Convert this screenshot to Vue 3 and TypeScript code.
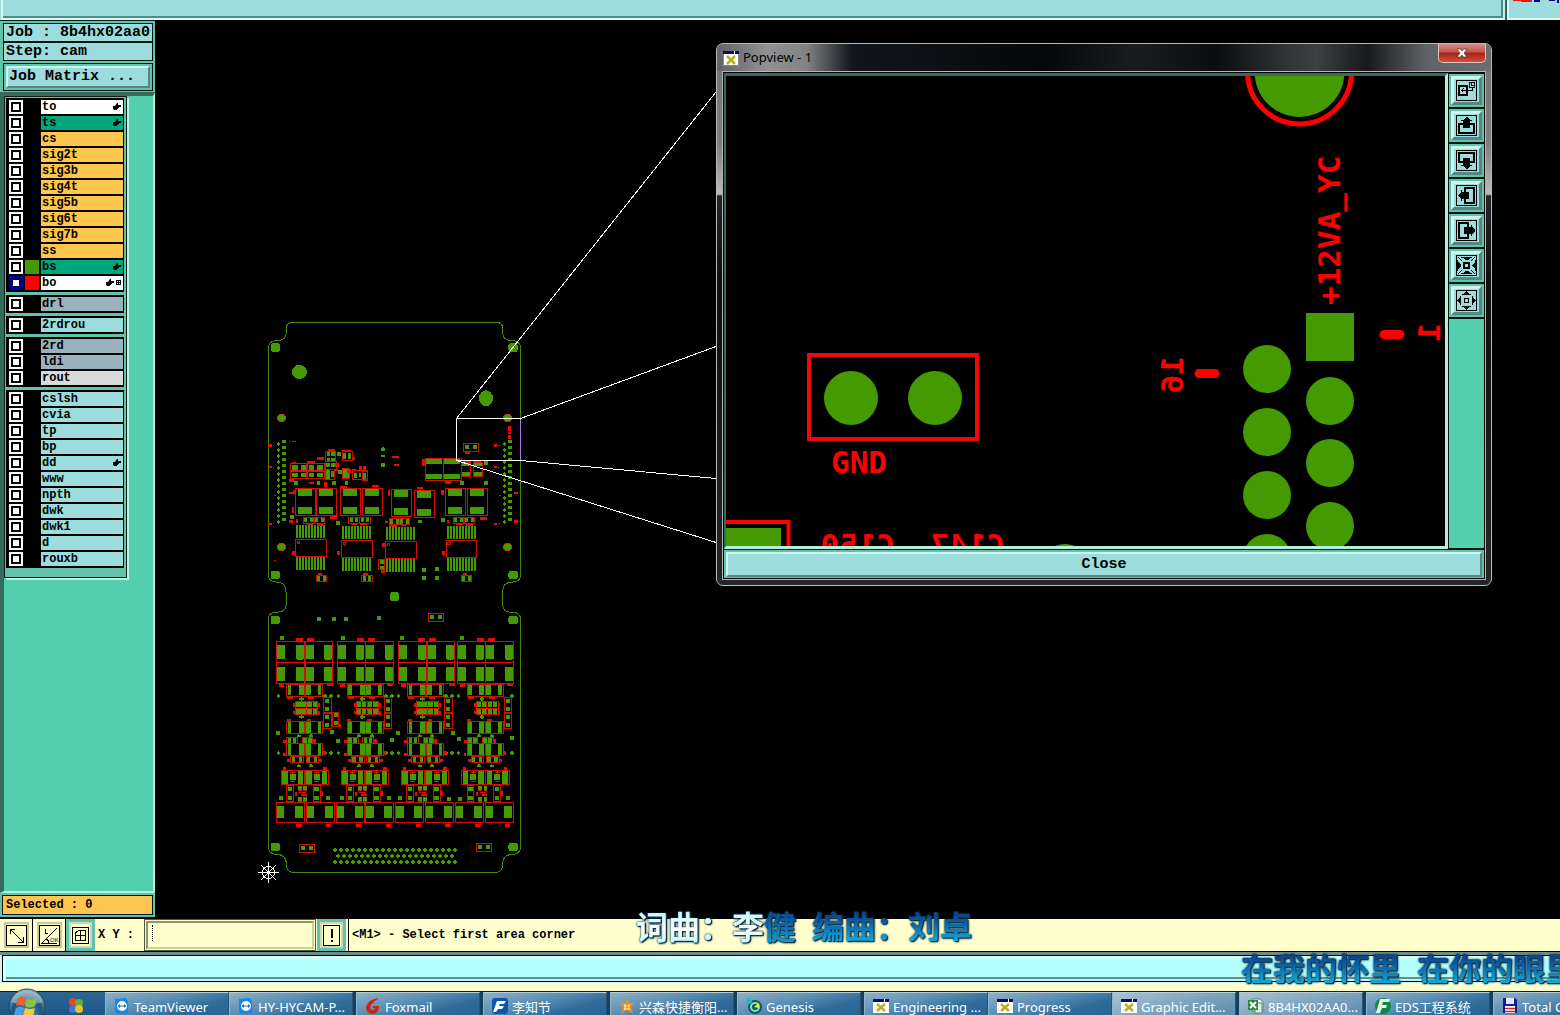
<script setup lang="ts">
import { ref } from 'vue'

type Box = [number, number, number, number]

interface Layer {
  name: string
  tone: string
  swatch?: string
  hand?: boolean
  grid?: boolean
  on?: boolean
}

const groups = ref<Layer[][]>([
  [
    { name: 'to', tone: 'white', hand: true },
    { name: 'ts', tone: 'green', hand: true },
    { name: 'cs', tone: 'amber' },
    { name: 'sig2t', tone: 'amber' },
    { name: 'sig3b', tone: 'amber' },
    { name: 'sig4t', tone: 'amber' },
    { name: 'sig5b', tone: 'amber' },
    { name: 'sig6t', tone: 'amber' },
    { name: 'sig7b', tone: 'amber' },
    { name: 'ss', tone: 'amber' },
    { name: 'bs', tone: 'green', swatch: 'lime', hand: true },
    { name: 'bo', tone: 'white', swatch: 'red', hand: true, grid: true, on: true },
  ],
  [{ name: 'drl', tone: 'slate' }],
  [{ name: '2rdrou', tone: 'aqua' }],
  [
    { name: '2rd', tone: 'slate' },
    { name: 'ldi', tone: 'slate' },
    { name: 'rout', tone: 'grey' },
  ],
  [
    { name: 'cslsh', tone: 'aqua' },
    { name: 'cvia', tone: 'aqua' },
    { name: 'tp', tone: 'aqua' },
    { name: 'bp', tone: 'aqua' },
    { name: 'dd', tone: 'aqua', hand: true },
    { name: 'www', tone: 'aqua' },
    { name: 'npth', tone: 'aqua' },
    { name: 'dwk', tone: 'aqua' },
    { name: 'dwk1', tone: 'aqua' },
    { name: 'd', tone: 'aqua' },
    { name: 'rouxb', tone: 'aqua' },
  ],
])

const xy = ref('')

const tasks = [
  { icon: 'tv', label: 'TeamViewer', gap: false },
  { icon: 'tv', label: 'HY-HYCAM-P...', gap: false },
  { icon: 'fox', label: 'Foxmail', gap: true },
  { icon: 'f', label: '李知节', gap: true },
  { icon: 'star', label: '兴森快捷衡阳...', gap: true },
  { icon: 'gen', label: 'Genesis', gap: true },
  { icon: 'x', label: 'Engineering ...', gap: true },
  { icon: 'x', label: 'Progress', gap: false },
  { icon: 'x', label: 'Graphic Edit...', gap: false, lit: true },
  { icon: 'xls', label: '8B4HX02AA0...', gap: true, lit: true },
  { icon: 'eds', label: 'EDS工程系统', gap: true },
  { icon: 'disk', label: 'Total Co...', gap: true },
]

const views = ['home', 'up', 'down', 'left', 'right', 'in', 'out']
const turn: Record<string, number> = { up: 0, right: 90, down: 180, left: 270 }

/* Board artwork, three units to one screen pixel. */
const pads: Box[] = []
const silk: Box[] = []
const marks: Box[] = []
const pad = (...b: Box) => pads.push(b)
const box = (...b: Box) => silk.push(b)
const mark = (...b: Box) => marks.push(b)

// side connectors
for (let i = 0; i < 14; i++) {
  const y = 389 + i * 18
  for (const x of [67, 744]) pad(x, y, 12, 11)
  for (const x of [51, 728]) { pad(x, y + 11, 10, 6); pad(x + 3, y + 8, 4, 11) }
}
for (const [x, y] of [[25, 406], [25, 471], [25, 641], [702, 406], [702, 471], [702, 641], [763, 548], [763, 634], [88, 548], [88, 634]]) {
  mark(x, y - 3, 10, 7); mark(x + 13, y - 1, 5, 3)
}
for (const [x, y] of [[86, 393], [96, 393], [103, 393], [42, 555], [718, 555], [42, 751]]) mark(x, y, 5, 3)
mark(744, 348, 10, 14); mark(745, 365, 8, 7); mark(744, 376, 10, 10)

// small parts on the upper left
for (const b of [[92, 460, 100, 46], [196, 425, 30, 30], [196, 455, 32, 22], [196, 477, 26, 30], [246, 424, 32, 28], [248, 476, 20, 30], [278, 482, 44, 26], [306, 484, 16, 28]] as Box[]) box(...b)
for (const b of [
  [97, 466, 18, 14], [124, 466, 18, 14], [148, 466, 14, 14], [172, 466, 18, 14],
  [97, 488, 18, 14], [124, 488, 18, 14], [148, 488, 14, 14], [172, 488, 18, 14],
  [200, 427, 10, 11], [214, 427, 10, 11], [200, 443, 10, 10], [214, 443, 10, 10], [232, 427, 10, 10],
  [248, 428, 10, 20], [264, 428, 10, 20], [198, 458, 12, 14], [214, 458, 10, 14], [198, 480, 12, 26], [214, 484, 12, 16],
  [234, 480, 12, 12], [250, 476, 16, 28], [282, 488, 8, 16], [296, 488, 8, 14], [310, 490, 8, 16],
  [364, 414, 11, 8], [364, 436, 11, 6], [363, 458, 13, 12], [367, 411, 5, 12], [102, 512, 12, 12], [170, 514, 10, 10],
  [217, 513, 12, 12], [256, 514, 8, 10], [600, 514, 11, 11], [673, 513, 11, 11], [673, 454, 11, 11], [91, 615, 11, 12], [228, 633, 12, 11], [475, 631, 10, 8], [544, 625, 10, 10],
  [487, 774, 11, 11], [526, 771, 11, 11], [487, 798, 11, 11], [526, 798, 11, 11],
] as Box[]) pad(...b)
for (const b of [
  [92, 479, 100, 6], [139, 460, 5, 46], [95, 455, 14, 6], [142, 454, 22, 7], [172, 440, 20, 10], [204, 418, 22, 6],
  [226, 460, 10, 12], [262, 478, 12, 10], [246, 420, 28, 4], [278, 440, 8, 10], [298, 468, 8, 12], [310, 468, 8, 12],
  [88, 508, 14, 7], [147, 515, 15, 7], [192, 516, 10, 14], [222, 478, 12, 6], [276, 478, 12, 5], [396, 438, 20, 5], [402, 461, 14, 6],
  [487, 447, 9, 20], [555, 514, 18, 7], [615, 425, 14, 6], [610, 452, 24, 6], [640, 449, 22, 6],
  [96, 592, 7, 18], [98, 540, 6, 12], [241, 527, 20, 6], [337, 526, 20, 6], [383, 541, 6, 18], [472, 530, 18, 7], [544, 540, 7, 16],
  [210, 619, 20, 7], [660, 622, 20, 7], [108, 628, 6, 10], [376, 634, 8, 6], [560, 630, 6, 8], [140, 640, 20, 6], [170, 642, 20, 5], [274, 640, 16, 6], [300, 640, 20, 6], [388, 644, 24, 6], [424, 644, 14, 5], [588, 640, 20, 6], [618, 642, 20, 6],
  [97, 724, 8, 11], [232, 724, 8, 12], [366, 698, 8, 12], [546, 724, 8, 12], [362, 780, 12, 8], [174, 789, 12, 6], [310, 790, 14, 6], [608, 790, 14, 6],
] as Box[]) mark(...b)

for (const [x, y] of [[106, 535], [169, 535], [241, 535], [307, 535], [394, 538], [463, 541], [556, 535], [622, 535]]) {
  box(x, y, 61, 81); pad(x + 9, y + 2, 40, 21); pad(x + 9, y + 56, 40, 21)
}
for (const x of [496, 550]) { box(x, 446, 54, 65); pad(x + 3, 446, 48, 15); pad(x + 3, 492, 48, 15) }
for (const x of [604, 640]) { box(x, 456, 28, 44); pad(x + 3, 458, 22, 11); pad(x + 3, 485, 22, 13) }

for (const [x, y] of [[130, 621], [163, 621], [266, 621], [299, 621], [388, 626], [418, 626], [580, 621], [613, 621], [169, 796], [305, 796], [604, 796]]) {
  box(x, y, 31, 18); pad(x + 3, y + 2, 9, 14); pad(x + 19, y + 2, 9, 14)
}
box(356, 748, 18, 30); pad(359, 751, 12, 10); pad(359, 767, 12, 9)

for (const [x, y, w] of [[106, 688, 94], [244, 691, 94], [376, 694, 94], [558, 691, 92]]) {
  box(x, y, w, 50); box(x + 5, y + 5, 7, 7)
  for (let i = 0; i < 10; i++) { pad(x + 3 + i * 9, y - 42, 6, 39); pad(x + 3 + i * 9, y + 53, 6, 39) }
}

// two-pin headers
for (const [x, y] of [[610, 400], [505, 910], [118, 1603], [649, 1600]]) {
  box(x, y, 46, 23); pad(x + 6, y + 6, 12, 12); pad(x + 28, y + 6, 12, 12)
}

// loose test points
for (const [x, y] of [[171, 921], [216, 921], [252, 921], [351, 918], [60, 978], [244, 978], [420, 978], [600, 978], [48, 1263], [228, 1287], [390, 1284], [408, 1263], [574, 1263], [592, 1281], [750, 1278], [210, 1260], [57, 1458], [198, 1458], [240, 1458], [380, 1458], [414, 1458], [560, 1461], [595, 1461], [738, 1458]]) pad(x, y, 12, 12)
for (const y of [1152, 1324]) for (const x of [50, 190, 208, 230, 372, 390, 410, 552, 570, 590, 750]) { pad(x, y + 3, 11, 5); pad(x + 3, y, 5, 11) }

// four repeated channels
const channels = [
  { a: 50, b: 80, c: 64 },
  { a: 232, b: 262, c: 244 },
  { a: 416, b: 443, c: 424 },
  { a: 592, b: 621, c: 605 },
]
channels.forEach(({ a, b, c }, n) => {
  for (const y of [994, 1058]) {
    for (const x of [a, a + 85]) {
      box(x, y, 83, 62); pad(x + 2, y + 12, 24, 42); pad(x + 57, y + 12, 24, 42); pad(x + 60, y + 52, 18, 4)
    }
  }
  mark(a + 58, 985, 22, 9); mark(a + 92, 985, 20, 9); mark(a, 1055, 168, 4)
  mark(a + 8, 1122, 14, 8); mark(a + 150, 1122, 18, 7)
  for (const y of [1123, 1235, 1301]) {
    box(b, y, 54, 35); box(b + 55, y, 53, 35)
    for (const dx of [3, 37, 57, 93]) pad(b + dx, y + 2, dx === 37 || dx === 57 ? 15 : 11, 31)
  }
  mark(b + 2, 1161, 18, 6); mark(b + 65, 1161, 18, 6); mark(b, 1226, 12, 8); mark(b + 60, 1226, 14, 7)
  box(b + 27, 1174, 66, 40)
  for (const dx of [29, 44, 62, 78]) for (const y of [1177, 1197]) pad(b + dx, y, 13, 15)
  mark(b + 27, 1194, 66, 3); mark(b + 58, 1174, 3, 40); mark(b + 20, 1180, 6, 10); mark(b + 95, 1180, 5, 12); mark(b + 20, 1204, 6, 8); mark(b + 95, 1204, 5, 10)
  for (const y of [1162, 1216]) { pad(b + 38, y + 2, 14, 7); pad(b + 42, y, 5, 12) }
  for (const y of [1162, 1210]) {
    box(b + 111, y, 22, 46); pad(b + 116, y + 6, 12, 12); pad(b + 116, y + 28, 12, 12)
  }
  for (const dx of [0, 46]) { box(b + dx, 1282, 32, 18); pad(b + dx + 3, 1284, 11, 14); pad(b + dx + 18, 1284, 11, 14) }
  for (const dx of [12, 58]) { box(b + dx, 1338, 38, 20); pad(b + dx + 3, 1340, 10, 16); pad(b + dx + 24, 1340, 10, 16) }
  mark(b - 10, 1290, 10, 10); mark(b + 78, 1286, 10, 14); mark(b - 10, 1328, 8, 10); mark(b + 108, 1322, 9, 14); mark(b + 2, 1346, 9, 11); mark(b + 98, 1346, 8, 9)
  for (const dx of [30, 68]) for (const y of [1271, 1361]) { pad(b + dx, y + 3, 12, 6); pad(b + dx + 3, y, 5, 11) }
  for (const dx of [0, 72]) {
    box(c + dx, 1381, 70, 43); pad(c + dx + 3, 1384, 16, 37); pad(c + dx + 50, 1384, 16, 37)
    pad(c + dx + 26, 1393, 18, 18); mark(c + dx + 27, 1387, 15, 3); mark(c + dx + 27, 1414, 15, 3)
    mark(c + dx + 33, 1384, 3, 9)
  }
  mark(c + 4, 1371, 10, 8); mark(c + 126, 1371, 10, 8)
  for (const dx of [16, 96]) { box(c + dx, 1427, 20, 47); pad(c + dx + 3, 1430, 14, 12); pad(c + dx + 3, 1459, 14, 12) }
  for (const dx of [50, 66]) for (const y of [1429, 1461]) { pad(c + dx, y, 11, 11); mark(c + dx, y + 11, 11, 3) }
  mark(c + 42, 1446, 6, 12); mark(c + 54, 1445, 20, 4); mark(c + 60, 1453, 16, 4); mark(c + 118, 1444, 7, 14)
  const e = 49 + n * 179
  for (const x of [e, e + 89]) {
    box(x, 1477, 84, 60); pad(x + 2, 1488, 22, 36); pad(x + 56, 1488, 24, 36)
    mark(x + 60, 1542, 16, 8)
  }
})
box(218, 1206, 18, 44); pad(221, 1210, 12, 12); pad(221, 1232, 12, 12); mark(236, 1242, 8, 10)

// bottom connector
for (let i = 0; i < 21; i++) {
  const x = 218 + i * 18
  for (const y of [1613, 1649]) { pad(x, y + 3, 12, 6); pad(x + 3, y, 6, 12) }
  if (i < 20) { pad(x + 9, 1634, 12, 6); pad(x + 12, 1631, 6, 12) }
}

const holes = [[46, 113], [759, 113], [46, 795], [759, 795], [46, 930], [759, 930], [46, 1611], [759, 1611], [403, 860]]
const rings = [[64, 324], [742, 324], [64, 711], [742, 711]]
const outline = 'M98 37Q79 37 79 56V68Q79 92 50 92Q25 92 25 116V792Q25 816 48 816Q78 816 78 845V885Q79 907 48 907Q25 907 25 930V1608Q25 1633 48 1633Q79 1633 79 1662Q79 1687 100 1687H708Q728 1687 728 1662Q728 1633 758 1633Q782 1633 782 1608V930Q782 907 758 907Q728 907 728 885V845Q728 816 758 816Q782 816 782 792V116Q782 92 756 92Q728 92 728 68V56Q728 37 708 37Z'

const discs = [[1267, 369], [1267, 432], [1267, 495], [1267, 558], [1330, 401], [1330, 463], [1330, 526]]
</script>

<template>
  <div class="screen">
    <header class="top">
      <div class="top-main"></div>
      <div class="top-side">
        <svg width="50" height="4" viewBox="0 0 50 4" aria-hidden="true">
          <path d="M4 0H23V2H12V1H4z" fill="#e11" />
          <path d="M25 0H31V2H25zM40 0H46V1H40zM48 0H50V3H48z" fill="#008" />
        </svg>
      </div>
    </header>

    <main class="work">
      <aside class="side">
        <div class="info">
          <div class="line">Job : 8b4hx02aa0</div>
          <div class="line">Step: cam</div>
        </div>
        <div class="matrix"><button type="button" class="bevel">Job Matrix ...</button></div>
        <div class="well">
          <div class="layers">
            <div v-for="(g, gi) in groups" :key="gi" class="group">
              <div v-for="l in g" :key="l.name" class="row">
                <input :id="'layer-' + l.name" v-model="l.on" type="checkbox" />
                <span class="swatch" :class="l.swatch"></span>
                <label :for="'layer-' + l.name" :class="l.tone">
                  <span class="name">{{ l.name }}</span>
                  <svg v-if="l.hand" width="8" height="8" viewBox="0 0 8 8"><path d="M0 3H2L4 0H5V2H8V4H6V5H5V6H4V7H1L0 6z" /></svg>
                  <svg v-if="l.grid" width="5" height="8" viewBox="0 0 5 8"><path d="M0 1.500H5M0 3.500H5M0 5.500H5M.5 1V6M2.500 1V6M4.500 1V6" stroke="#000" fill="none" /></svg>
                </label>
              </div>
            </div>
          </div>
        </div>
        <div class="selected"><div>Selected : 0</div></div>
      </aside>

      <section class="canvas">
        <svg class="plot" aria-label="Board">
          <svg x="105" y="290" width="270" height="570" viewBox="0 0 810 1710" shape-rendering="crispEdges">
            <path :d="outline" fill="none" stroke="#3d8a08" stroke-width="3" />
            <rect v-for="(p, i) in pads" :key="'p' + i" :x="p[0]" :y="p[1]" :width="p[2]" :height="p[3]" fill="#449a00" />
            <rect v-for="(h, i) in holes" :key="'h' + i" :x="h[0] - 14" :y="h[1] - 13" width="28" height="26" rx="8" fill="#449a00" />
            <ellipse cx="118" cy="186" rx="23" ry="21" fill="#449a00" />
            <ellipse cx="678" cy="265" rx="21" ry="24" fill="#449a00" />
            <circle v-for="(h, i) in rings" :key="'r' + i" :cx="h[0]" :cy="h[1]" r="12" fill="#449a00" stroke="#c8380a" stroke-width="3" />
            <rect v-for="(s, i) in silk" :key="'s' + i" :x="s[0]" :y="s[1]" :width="s[2]" :height="s[3]" fill="none" stroke="#d01008" stroke-width="3" />
            <rect v-for="(m, i) in marks" :key="'m' + i" :x="m[0]" :y="m[1]" :width="m[2]" :height="m[3]" fill="#e80c08" />
          </svg>
          <g transform="translate(-155 -20)" fill="none" stroke="#fff" shape-rendering="crispEdges">
            <path d="M456.500 460.500V418.500H520.500M456.500 460.500H520.500M456.500 418.500L716 92M520.500 418.500L716 346.500M520.500 460.500L716 478.500M456.500 460.500L716 542.500" />
            <path d="M520.500 419V460" stroke="#b070f0" />
            <path d="M258 872.500H279M268.500 862V883M261 865L276 880M276 865L261 880" />
            <circle cx="268.500" cy="872.500" r="6" />
          </g>
        </svg>

        <div class="popview">
          <div class="caption">
            <svg class="xicon" width="16" height="16" viewBox="0 0 16 16"><path d="M0 1H16V16H0z" fill="#fff" /><path d="M0 1H11V4H0zM12 1H16V4H12z" fill="#0a0a70" /><path d="M4 6L12 14M12 6L4 14" stroke="#b9b020" stroke-width="2.500" /><path d="M.5 4V15.500H15.500V4" fill="none" stroke="#888" /></svg>
            <span class="title">Popview - 1</span>
            <button type="button" class="x" aria-label="Close window"><svg width="12" height="10" viewBox="0 0 12 10"><path d="M1 1H4.500L6 3L7.500 1H11L8 5L11 9H7.500L6 7L4.500 9H1L4 5z" fill="#fff" stroke="#5b2f2f" stroke-width=".7" /></svg></button>
          </div>
          <div class="client">
            <div class="stage">
              <svg class="zoomed" aria-label="Zoomed board">
                <g transform="translate(-726 -76)">
                  <circle cx="1299.500" cy="72" r="45" fill="#449a00" />
                  <circle cx="1299.500" cy="72" r="52" fill="none" stroke="red" stroke-width="5" />
                  <rect x="1306" y="313" width="48" height="48" fill="#449a00" />
                  <circle v-for="(d, i) in discs" :key="i" :cx="d[0]" :cy="d[1]" r="24" fill="#449a00" />
                  <circle cx="1065" cy="568" r="24" fill="#449a00" />
                  <circle cx="851" cy="398" r="27" fill="#449a00" />
                  <circle cx="935" cy="398" r="27" fill="#449a00" />
                  <rect x="809" y="355" width="168" height="84" fill="none" stroke="#f00808" stroke-width="4" />
                  <path d="M720 522H788.500V560" fill="none" stroke="red" stroke-width="4" />
                  <rect x="720" y="528" width="61" height="40" fill="#449a00" />
                  <path d="M1384 334.500H1400M1199 373.500H1215" stroke="red" stroke-width="9" stroke-linecap="round" />
                  <g class="pcb">
                    <text x="831" y="473">GND</text>
                    <text transform="translate(1340 305) rotate(-90)">+12VA_YC</text>
                    <text transform="matrix(0 1 1 0 1183 356)">16</text>
                    <text transform="matrix(0 1 1 0 1440 323)">1</text>
                    <text transform="matrix(-1 0 0 1 895 556)">C150</text>
                    <text transform="matrix(-1 0 0 1 1005 556)">C147</text>
                  </g>
                </g>
              </svg>
              <div class="tools">
                <div v-for="v in views" :key="v" class="cell">
                  <button type="button" class="bevel" :aria-label="v">
                    <svg width="21" height="21" viewBox="0 0 21 21" shape-rendering="crispEdges">
                      <rect x=".5" y=".5" width="20" height="20" fill="none" stroke="#000" />
                      <g v-if="v === 'home'" fill="none" stroke="#000">
                        <rect x="3" y="6" width="8" height="9" stroke-width="2" />
                        <rect x="13.500" y="2.500" width="5" height="5" /><path d="M15.500 3V5.500H18M16.500 8V10.500H5M7.500 8.500L5.500 10.500L7.500 12.500" />
                      </g>
                      <g v-else-if="v === 'in'">
                        <rect x="8" y="8" width="5" height="5" fill="none" stroke="#000" stroke-width="2" />
                        <path d="M5 2H16V3H14L12 5H9L7 3H5zM5 19H16V18H14L12 16H9L7 18H5zM1 5V16H2V14L5 11V10L2 7V5zM20 5V16H19V14L16 11V10L19 7V5z" />
                        <path d="M2 2L6 6M19 2L15 6M2 19L6 15M19 19L15 15" stroke="#000" />
                      </g>
                      <g v-else-if="v === 'out'">
                        <rect x="8.500" y="8.500" width="4" height="4" fill="none" stroke="#000" />
                        <path d="M10 1H11L13 4H15V5H6V4H8zM10 20H11L13 17H15V16H6V17H8zM1 10V11L4 13V15H5V6H4V8zM20 10V11L17 13V15H16V6H17V8z" />
                      </g>
                      <g v-else :transform="'rotate(' + turn[v] + ' 10.5 10.5)'">
                        <path d="M8 9H3V18H18V9H13" fill="none" stroke="#000" stroke-width="2" />
                        <path d="M10 2H11L14 5H16V6H14V13H7V6H5V5H7z" />
                      </g>
                    </svg>
                  </button>
                </div>
              </div>
            </div>
            <div class="closebar"><button type="button" class="bevel">Close</button></div>
          </div>
        </div>
      </section>
    </main>

    <footer class="foot">
      <div class="command">
        <button type="button" class="tool" aria-label="Zoom"><svg width="21" height="21" viewBox="0 0 21 21"><path d="M.5 .5H20.500V20.500H.5zM4 4L17 17M4 9V4H9M12 17H17V12" /></svg></button>
        <button type="button" class="tool" aria-label="Angle"><svg width="21" height="21" viewBox="0 0 21 21"><path d="M.5 .5H20.500V20.500H.5zM18 3L3 18H18M6 4V8H9M7 14Q10 15 10 18" /><text x="11" y="17">OK</text></svg></button>
        <button type="button" class="tool on" aria-label="Grid"><svg width="21" height="21" viewBox="0 0 21 21"><path d="M2.500 2.500H18.500V18.500H2.500zM10.500 5V16M5 10.500H16M5.500 16V9Q6 5.500 11 5.500H15.500V15.500H5" /></svg></button>
        <label class="xy" for="xy">X Y :</label>
        <div class="entry"><input id="xy" v-model="xy" type="text" /><i class="caret"></i></div>
        <button type="button" class="tool on bang" aria-label="Alert"><svg width="21" height="21" viewBox="0 0 21 21"><path d="M2.500 .5H18.500V20.500H2.500z" /><path d="M10.500 4V13M10.500 15V17" stroke-width="2" /></svg></button>
        <span class="prompt">&lt;M1&gt; - Select first area corner</span>
      </div>
      <div class="message"><div></div></div>
      <nav class="taskbar">
        <svg class="orb" width="40" height="40" viewBox="0 0 40 40" aria-label="Start">
          <defs>
            <radialGradient id="orb" cx=".5" cy=".7" r=".7"><stop offset="0" stop-color="#3fa4cf" /><stop offset=".6" stop-color="#1d5278" /><stop offset="1" stop-color="#9db8c8" /></radialGradient>
          </defs>
          <circle cx="20" cy="20" r="18" fill="url(#orb)" stroke="#23435a" />
          <path d="M4 15A17 17 0 0 1 36 15Q20 20 4 15" fill="#c7dbe5" opacity=".45" />
          <path d="M11 11Q15 8 19 11L17 19Q13 17 9 19z" fill="#e8642c" />
          <path d="M20 12Q25 14 30 11L28 19Q23 22 18 19z" fill="#8cc63e" />
          <path d="M9 21Q13 18 17 21L15 29Q11 26 7 29z" fill="#4b9fe0" />
          <path d="M18 21Q23 23 28 21L26 29Q21 32 16 29z" fill="#fbc633" />
        </svg>
        <svg class="wheel" width="18" height="18" viewBox="0 0 18 18" aria-label="Launcher"><circle cx="6" cy="5" r="4" fill="#e04a2a" /><circle cx="12" cy="6" r="4" fill="#5cb43a" /><circle cx="6" cy="12" r="4" fill="#3a78d8" /><circle cx="12" cy="12" r="4" fill="#e8c22c" /></svg>
        <a v-for="(t, i) in tasks" :key="i" href="#" class="task" :class="{ gap: t.gap, lit: t.lit }">
          <svg width="16" height="16" viewBox="0 0 16 16">
            <g v-if="t.icon === 'tv'"><path d="M1 1L12 0L14 3V15L3 16L1 14z" fill="#1687e8" /><circle cx="8" cy="8" r="5" fill="#fff" /><path d="M3.500 8L6 6V7.500H10V6L12.500 8L10 10V8.500H6V10z" fill="#1470c8" /></g>
            <g v-else-if="t.icon === 'fox'"><path d="M14 0Q3 1 1 9Q1 16 8 16Q14 15 14 8L8 8V10H10Q9 13 7 12Q4 11 6 7Q9 3 14 0z" fill="#d4200c" /></g>
            <g v-else-if="t.icon === 'f'"><rect width="16" height="16" rx="3" fill="#0b56b0" /><path d="M5 3H14L12 6H8L7 8H12L10 11H6L4 14H1z" fill="#fff" /></g>
            <g v-else-if="t.icon === 'star'"><path d="M8 0L10 5L16 5L12 9L14 16L8 12L2 16L4 9L0 5L6 5z" fill="#f58a1c" /><path d="M5 8H11M6 6V12M10 6V12M5 11H11" stroke="#fff0a0" fill="none" /></g>
            <g v-else-if="t.icon === 'gen'"><circle cx="9" cy="9" r="7" fill="#0c5a50" /><circle cx="9" cy="9" r="4" fill="none" stroke="#7fe0d0" stroke-width="2" /><path d="M8 9L13 5V10z" fill="#e8f040" /><circle cx="3" cy="3" r="3" fill="#27b7c4" /></g>
            <g v-else-if="t.icon === 'x'"><path d="M0 1H16V15H0z" fill="#fff" /><path d="M0 1H11V4H0zM12 1H16V4H12z" fill="#0a0a70" /><path d="M4 6L12 13M12 6L4 13" stroke="#b9b020" stroke-width="2.500" /></g>
            <g v-else-if="t.icon === 'xls'"><path d="M4 1H12L15 4V13H4z" fill="#eef6ee" stroke="#587" /><path d="M7 5H14V15H7z" fill="#dfeee0" stroke="#587" /><rect x="0" y="2" width="10" height="10" fill="#2c8a3c" /><path d="M2 4L8 10M8 4L2 10" stroke="#fff" stroke-width="2" /></g>
            <g v-else-if="t.icon === 'eds'"><circle cx="8" cy="8" r="8" fill="#12864a" /><path d="M5 1H15L14 4H8L7 7H12L11 10H7L5 15H1z" fill="#e6f5e0" /></g>
            <g v-else><path d="M1 0H13L15 2V15H1z" fill="#1a1a90" /><path d="M4 0H12V6H4z" fill="#e8e8f4" /><path d="M3 8H13V15H3z" fill="#fff" /><path d="M3 10.500H13M3 13.500H13" stroke="#d22" stroke-width="1.500" /></g>
          </svg>
          <span>{{ t.label }}</span>
        </a>
      </nav>
      <div class="lyric first"><p><span class="sung">词曲：李</span><span>健</span></p><p>编曲：刘卓</p></div>
      <div class="lyric second"><p>在我的怀里</p><p>在你的眼里</p></div>
    </footer>
  </div>
</template>

<style>
body { background: #000; overflow: hidden; }
</style>

<style scoped>
* { box-sizing: border-box; }
.screen {
  height: 100vh; display: flex; flex-direction: column; overflow: hidden; background: #000; color: #000;
  font: bold 12px/14px "Liberation Mono", monospace;
}
button { font: inherit; color: inherit; padding: 0; margin: 0; border-radius: 0; }
svg { display: block; flex: none; }

.top { display: flex; height: 20px; background: #9cdcdc; }
.top-main { flex: 1; margin-left: 1px; border: 2px solid #d8f8f4; border-width: 0 0 2px 2px; box-shadow: inset -2px -2px #558a8a; border-right: 2px solid #c4efee; }
.top-side { width: 53px; border: solid #d8f8f4; border-width: 0 0 2px 2px; box-shadow: -2px 0 #335f5c; margin-left: 2px; overflow: hidden; }

.work { flex: 1; display: flex; min-height: 0; }
.side { width: 155px; flex: none; display: flex; flex-direction: column; background: #62c2aa; margin-bottom: 2px; border-top: 1px solid #0c201a; }
.info { margin: 2px 2px 2px 3px; border: 1px solid #05150f; background: #05150f; display: flex; flex-direction: column; gap: 2px; font-size: 15px; line-height: 17px; }
.line { background: #9cdcdc; padding-left: 2px; white-space: pre; height: 17px; overflow: hidden; }
.matrix { margin: 0 2px 0 3px; border: 1px solid #05150f; padding: 2px; height: 28px; display: flex; }
.bevel { background: #9cdcdc; border: 2px solid; border-color: #cdf5f0 #4f8886 #4f8886 #cdf5f0; }
.matrix .bevel { flex: 1; text-align: left; font-size: 15px; line-height: 18px; padding-left: 1px; }
.well { flex: 1; margin-top: 1px; border: solid; border-width: 4px 2px 2px 4px; border-color: #336b5c #b5efdc #b5efdc #336b5c; background: #53cfb0; }
.layers { width: 123px; height: 482px; background: #62c2aa; border: 1px solid #0c201a; padding: 1px; box-shadow: 2px 2px #c0f2e2; display: flex; flex-direction: column; gap: 3px; }
.group { width: 118px; background: #000; padding: 1px; }
.row { height: 16px; display: flex; align-items: center; gap: 2px; padding-left: 2px; }
.row input { appearance: none; margin: 0; width: 14px; height: 14px; flex: none; background: #fff; border: 2px solid #fff; box-shadow: inset 0 0 0 2px #000; }
.row input:checked { border-color: #0000a0; box-shadow: inset 0 0 0 2px #00005c; }
.swatch { width: 14px; height: 14px; flex: none; }
.lime { background: #449a00; }
.red { background: red; }
.row label { flex: 1; height: 14px; display: flex; align-items: center; gap: 2px; padding: 0 2px 0 1px; line-height: 14px; }
.name { flex: 1; }
.white { background: #fff; }
.green { background: #00a67c; }
.amber { background: #fdc64e; }
.slate { background: #9ab2bd; }
.aqua { background: #9cdcdc; }
.grey { background: #dadada; }
.selected { padding: 2px; }
.selected div { border: 1px solid #05150f; background: #fdc64e; height: 20px; line-height: 18px; padding-left: 3px; }

.canvas { flex: 1; position: relative; min-width: 0; overflow: hidden; }
.plot { width: 100%; height: 100%; }

.popview {
  position: absolute; left: 561px; top: 23px; width: 776px; height: 543px; padding: 0 5px 5px; border: 1px solid #b8bcbe; border-radius: 7px;
  background: linear-gradient(#6e7275 0, #7b7f82 100px, #b8bbbd 150px, #20262a 152px, #0c0f12 240px, #23272a 100%);
  display: flex; flex-direction: column;
}
.popview::before { content: ""; position: absolute; inset: 0 0 auto; height: 27px; border-radius: 6px 6px 0 0; background: linear-gradient(90deg, #606568 0, #8f9193 50px, #808284 90px, #10161b 135px, #05080a 330px, #1a1d1f 420px, #0a0d10 500px, #303437 570px, #3c4043 600px, #17191b 650px, #606468 710px, #6a6d70 100%); }
.caption { position: relative; height: 27px; flex: none; display: flex; align-items: flex-start; }
.xicon { margin: 6px 4px 0 1px; }
.title { margin-top: 5px; flex: 1; font: 13px/16px "Noto Sans", "Open Sans", sans-serif; }
.x { width: 48px; height: 19px; border: 1px solid #e8c0ba; border-top: 0; border-radius: 0 0 5px 5px; background: linear-gradient(#cf8f86, #c4564a 45%, #a92014 50%, #c9543e); display: flex; align-items: center; justify-content: center; }
.client { position: relative; flex: 1; min-height: 0; border: 1px solid #b4b8ba; background: #000; display: flex; flex-direction: column; padding: 1px 1px 1px 1px; }
.stage { flex: 1; min-height: 0; display: flex; }
.zoomed { flex: 1; height: 100%; min-width: 0; border: solid; border-width: 3px 3px 3px 2px; border-color: #336b5c #b5efdc #b5efdc #336b5c; }
.pcb { font: bold 31px "DejaVu Sans Mono", monospace; fill: red; }
.tools { width: 36px; background: #53cfb0; border: solid #05150f; border-width: 1px 0 1px 1px; display: flex; flex-direction: column; }
.cell { height: 35px; flex: none; border-bottom: 2px solid #05150f; background: #62c2aa; padding: 2px; display: flex; }
.tools .bevel { flex: 1; border-width: 3px; display: flex; align-items: center; justify-content: center; }
.closebar { height: 29px; flex: none; border-top: 1px solid #05150f; background: #62c2aa; padding: 2px 2px 1px; display: flex; }
.closebar .bevel { flex: 1; font-size: 15px; line-height: 21px; }

.foot { position: relative; flex: none; background: #ffffcc; }
.command { height: 33px; display: flex; align-items: stretch; border-bottom: 1px solid #000; padding-left: 1px; }
.tool { width: 31px; flex: none; margin-right: 2px; border: 0; background: #ffffcc; box-shadow: 1px 0 #000, inset 0 0 0 3px #ffffcc, inset 0 0 0 5px #c8c8a0; display: flex; align-items: center; justify-content: center; }
.tool.on { width: 29px; box-shadow: inset 0 0 0 3px #62c2aa, inset 0 0 0 5px #c8d8b8; margin-right: 1px; margin-left: -1px; }
.tool svg { fill: none; stroke: #000; shape-rendering: crispEdges; }
.tool text { font: 6px "Liberation Sans", sans-serif; fill: #000; stroke: none; }
.xy { width: 48px; padding-left: 2px; line-height: 33px; white-space: pre; flex: none; }
.entry { position: relative; width: 172px; flex: none; border: 1px solid #4a5a40; padding: 1px; display: flex; }
.entry input { flex: 1; min-width: 0; border: 2px solid; border-color: #94946c #cfcfa4 #cfcfa4 #94946c; background: #ffffcc; font: inherit; padding: 0 4px; outline: 0; }
.caret { position: absolute; left: 7px; top: 5px; height: 16px; border-left: 1px dotted #000; }
.tool.bang { margin-left: 1px; }
.prompt { border-left: 1px solid #000; margin-left: 1px; padding-left: 3px; line-height: 33px; white-space: pre; }
.message { border-top: 3px solid #6e8c8c; padding: 0 0 0 2px; height: 31px; background: #cff4f4; }
.message div { height: 27px; border: solid #000; border-width: 1px 0 1px 1px; background: #b3fffe; box-shadow: inset 3px 3px #d4ffff, inset 0 -2px #c8f4f4, inset 0 -4px #5c9494; }
.taskbar { margin-top: 8px; height: 24px; border-top: 1px solid #10202c; background: linear-gradient(#2c6794, #1d5788); display: flex; align-items: flex-start; }
.orb { margin: -5px 0 0 7px; }
.wheel { margin: 5px 20px 0; }
.task { width: 124px; height: 34px; flex: none; padding: 5px 0 0 8px; display: flex; gap: 4px; overflow: hidden; color: #fff; text-decoration: none; white-space: nowrap; font: 13px/18px "Noto Sans", "Noto Sans CJK SC", sans-serif; border: 1px solid #8fb3cb; border-color: #b6cfde #2b526f #2b526f #8fb3cb; background: linear-gradient(165deg, #8db0c8 0, #5b8fb4 35%, #2f6c9b 60%, #22608f); }
.task.gap { margin-left: 3px; box-shadow: -3px 0 #16405f; }
.task.lit { background: linear-gradient(165deg, #a9c3d3, #7da4be 45%, #4f83a8); }

.lyric { position: absolute; display: flex; gap: 16px; font: bold 32px/32px "Noto Sans CJK SC", sans-serif; white-space: nowrap; filter: drop-shadow(0 0 1px #04283f) drop-shadow(1px 1px 0 #1b3c4c); }
.lyric p { margin: 0; flex: none; }
.lyric p, .lyric span { color: transparent; background: linear-gradient(#0a3f88 10%, #0c62a4 45%, #12a4d2 95%); background-clip: text; -webkit-background-clip: text; }
.lyric .sung { background-image: linear-gradient(#a5f0f8, #ffffff 60%, #a8f4fa); }
.first { left: 636px; top: -10px; }
.second { left: 1241px; right: 0; top: 32px; overflow: hidden; }
</style>
